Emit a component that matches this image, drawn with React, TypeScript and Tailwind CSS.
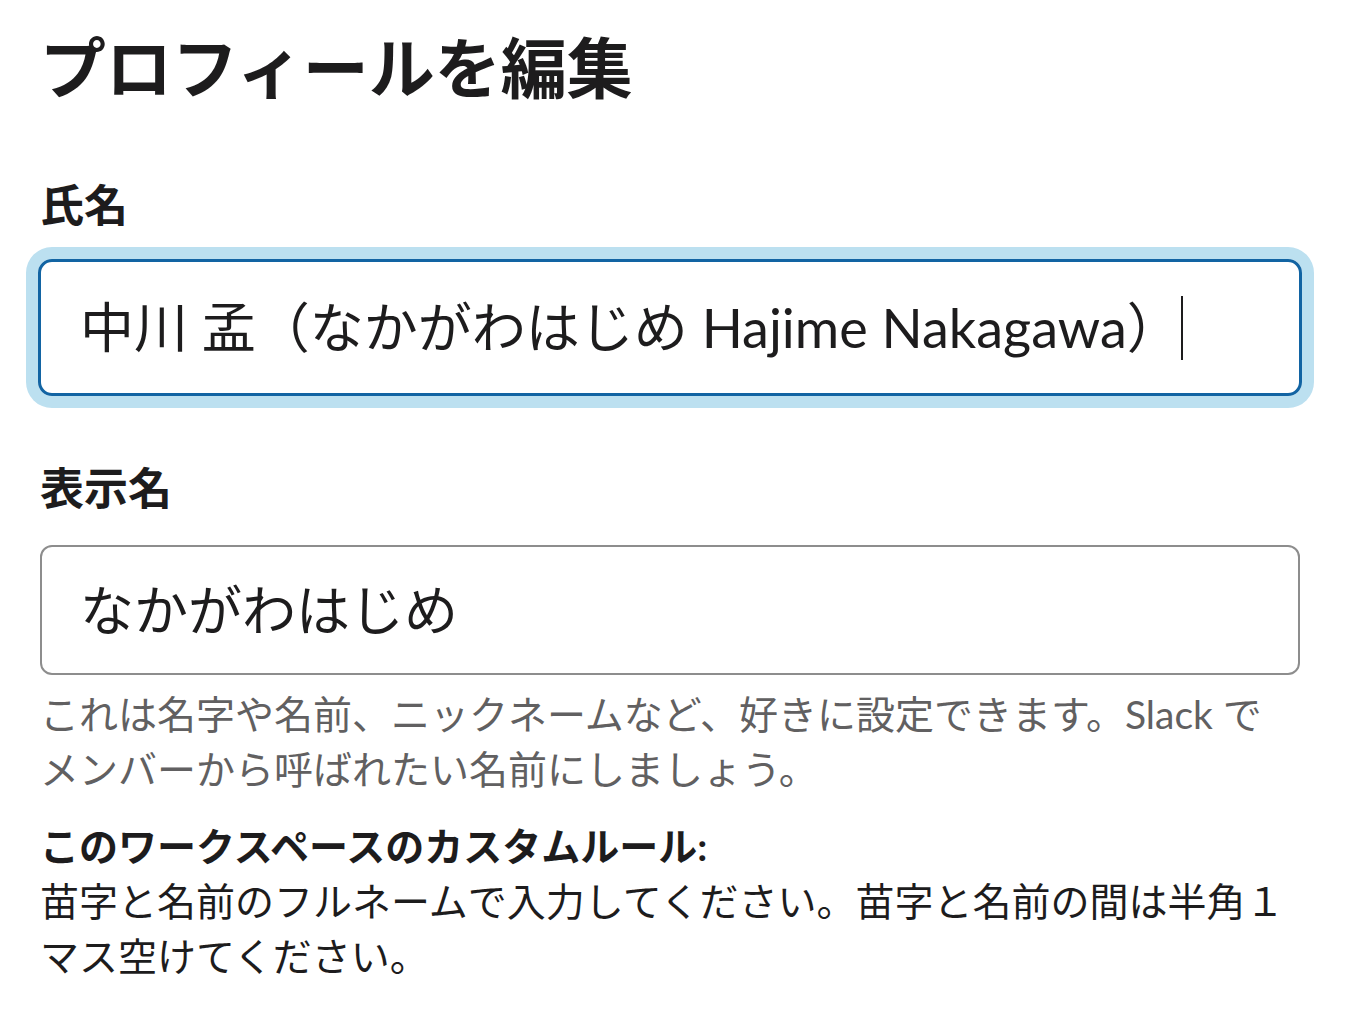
import React from 'react';

const App = () => {
  return (
    <div className="min-h-screen bg-white text-[#1d1c1d] font-[Lato,'Noto_Sans_CJK_JP',sans-serif] pl-[40px] pt-[28px]">
      <div className="w-[1260px]">
        <h1 className="text-[66px] leading-[80px] font-bold">プロフィールを編集</h1>

        <label className="block mt-[69px] text-[44px] leading-[56px] font-bold">氏名</label>
        <div className="mt-[26px] -mx-[2px] h-[137px] flex items-center border-[3px] border-[#1264a3] rounded-[14px] shadow-[0_0_0_12px_#bce0f0] pl-[39px]">
          <span className="text-[54px] whitespace-nowrap">中川 孟（なかがわはじめ Hajime Nakagawa）</span>
          <span className="inline-block w-[2px] h-[64px] bg-[#1d1c1d]" />
        </div>

        <label className="block mt-[64px] text-[44px] leading-[56px] font-bold">表示名</label>
        <div className="mt-[29px] h-[130px] flex items-center border-2 border-[#8d8d8d] rounded-[12px] pl-[38px]">
          <span className="text-[54px] whitespace-nowrap">なかがわはじめ</span>
        </div>

        <p className="mt-[12px] text-[39px] leading-[55px] text-[#616061]">
          これは名字や名前、ニックネームなど、好きに設定できます。Slack で
          <br />
          メンバーから呼ばれたい名前にしましょう。
        </p>

        <div className="mt-[22px] text-[39px] leading-[55px]">
          <p className="font-bold">このワークスペースのカスタムルール:</p>
          <p>
            苗字と名前のフルネームで入力してください。苗字と名前の間は半角１
            <br />
            マス空けてください。
          </p>
        </div>
      </div>
    </div>
  );
};

export default App;
